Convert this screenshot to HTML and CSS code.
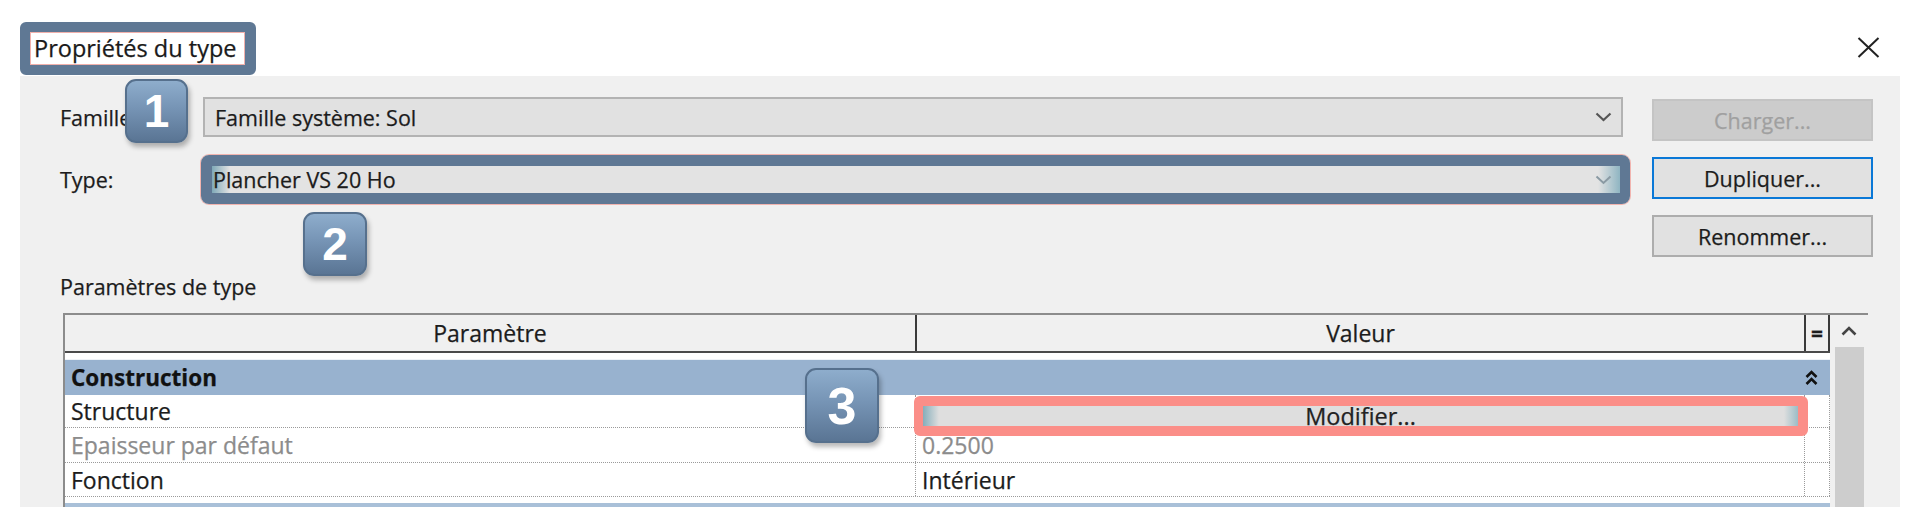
FILE: index.html
```html
<!DOCTYPE html>
<html lang="fr">
<head>
<meta charset="utf-8">
<title>Propriétés du type</title>
<link rel="stylesheet" href="styles.css">
</head>
<body>
<div class="dialog">
  <header class="titlebar">
    <div class="title-hl"><span class="title">Propriétés du type</span></div>
    <button class="close" aria-label="Fermer">
      <svg width="23" height="21" viewBox="0 0 23 21"><path d="M1.5 1 L21.5 20 M21.5 1 L1.5 20" stroke="#222" stroke-width="2" fill="none"/></svg>
    </button>
  </header>

  <section class="panel">
    <div class="top">
      <div class="fields">
        <div class="row r-famille">
          <span class="lbl">Famille:</span>
          <div class="select">
            <span class="sel-text">Famille système: Sol</span>
            <svg class="chev" width="17" height="10" viewBox="0 0 17 10"><path d="M1.5 1.5 L8.5 8 L15.5 1.5" stroke="#555" stroke-width="2.2" fill="none"/></svg>
          </div>
        </div>
        <div class="row r-type">
          <span class="lbl">Type:</span>
          <div class="hl-type">
            <div class="select sel-type">
              <span class="sel-text">Plancher VS 20 Ho</span>
              <svg class="chev light" width="17" height="10" viewBox="0 0 17 10"><path d="M1.5 1.5 L8.5 8 L15.5 1.5" stroke="#8a9aa3" stroke-width="2" fill="none"/></svg>
            </div>
          </div>
        </div>
      </div>
      <div class="buttons">
        <button class="btn disabled">Charger...</button>
        <button class="btn focused">Dupliquer...</button>
        <button class="btn">Renommer...</button>
      </div>
    </div>

    <div class="section-label">Paramètres de type</div>

    <div class="table">
      <div class="grid">
        <div class="head">
          <div class="c">Paramètre</div>
          <div class="c">Valeur</div>
          <div class="c eq">=</div>
        </div>
        <div class="spacer"></div>
        <div class="cat">
          <span>Construction</span>
          <svg width="13" height="16" viewBox="0 0 13 16"><path d="M1.5 7 L6.5 2 L11.5 7 M1.5 14 L6.5 9 L11.5 14" stroke="#111" stroke-width="2.6" fill="none"/></svg>
        </div>
        <div class="data h33">
          <div class="c">Structure</div>
          <div class="c val-bar"><div class="bar">Modifier...</div></div>
          <div class="c"></div>
        </div>
        <div class="data h35 muted">
          <div class="c">Epaisseur par défaut</div>
          <div class="c">0.2500</div>
          <div class="c"></div>
        </div>
        <div class="data h34">
          <div class="c">Fonction</div>
          <div class="c">Intérieur</div>
          <div class="c"></div>
        </div>
        <div class="gap"></div>
        <div class="cat next"></div>
      </div>
      <div class="scroll">
        <div class="arrow">
          <svg width="16" height="10" viewBox="0 0 16 10"><path d="M1.5 8.5 L8 2 L14.5 8.5" stroke="#444" stroke-width="2.6" fill="none"/></svg>
        </div>
        <div class="thumb"></div>
      </div>
    </div>
  </section>

  <div class="hl-red"></div>

  <div class="badge b1">1</div>
  <div class="badge b2">2</div>
  <div class="badge b3">3</div>
</div>
</body>
</html>
```

FILE: styles.css
```css
* { box-sizing: border-box; }

html, body {
  margin: 0;
  padding: 0;
}

body {
  width: 1924px;
  height: 526px;
  overflow: hidden;
  background: #ffffff;
  font-family: "Open Sans", "Noto Sans", sans-serif;
  color: #1c1c1c;
  -webkit-text-stroke: 0.25px currentColor;
}

.dialog {
  position: relative;
  width: 1924px;
  height: 526px;
}

/* title bar */
.titlebar {
  height: 76px;
  display: flex;
  align-items: flex-start;
  padding: 22px 44px 0 20px;
}

.title-hl {
  width: 236px;
  height: 53px;
  border: 10px solid #5f7894;
  border-right-width: 11px;
  border-radius: 6px;
  background: #ffffff;
  box-shadow: inset 0 0 0 1px #f1b0ab;
  display: flex;
  align-items: center;
  padding-left: 4px;
}

.title {
  font-size: 23.5px;
  line-height: 1;
  color: #1a1a1a;
  white-space: nowrap;
}

.close {
  margin-left: auto;
  margin-top: 15px;
  width: 23px;
  height: 21px;
  padding: 0;
  border: 0;
  background: none;
  display: block;
}

.close svg { display: block; }

/* panel */
.panel {
  margin-left: 20px;
  width: 1880px;
  height: 431px;
  background: #f0f0f0;
  overflow: hidden;
  padding: 21px 0 0 40px;
}

.top {
  display: flex;
  align-items: flex-start;
}

.fields {
  display: flex;
  flex-direction: column;
  gap: 18px;
  width: 1570px;
}

.row {
  display: flex;
  align-items: center;
}

.lbl {
  font-size: 21.5px;
  white-space: nowrap;
}

.r-famille .lbl { width: 143px; }
.r-type .lbl { width: 141px; }

.select {
  display: flex;
  align-items: center;
  justify-content: space-between;
  background: #e1e1e1;
  font-size: 21.5px;
}

.r-famille .select {
  width: 1420px;
  height: 40px;
  border: 2px solid #b3b3b3;
  padding: 0 9px 0 10px;
}

.sel-text { white-space: nowrap; }

.chev { display: block; }

.hl-type {
  width: 1429px;
  height: 49px;
  border-style: solid;
  border-color: #5f7894;
  border-width: 11px 10px 11px 11px;
  border-radius: 8px;
  box-shadow: 0 0 0 1px rgba(242, 160, 154, 0.75);
}

.sel-type {
  width: 100%;
  height: 27px;
  padding: 0 8px 0 1px;
  background:
    linear-gradient(90deg, #7fa9b8 0, rgba(227, 227, 227, 0) 18px),
    linear-gradient(270deg, #8fb5c2 0, rgba(227, 227, 227, 0) 22px),
    #e3e3e3;
}

/* buttons */
.buttons {
  display: flex;
  flex-direction: column;
  gap: 16px;
  margin-left: 22px;
  padding-top: 2px;
}

.btn {
  width: 221px;
  height: 42px;
  font-family: inherit;
  font-size: 21.5px;
  color: #1c1c1c;
  background: #e1e1e1;
  border: 2px solid #adadad;
  padding: 0;
  -webkit-text-stroke: 0.25px currentColor;
}

.btn.disabled {
  background: #cccccc;
  border-color: #c4c4c4;
  color: #a0a0a0;
}

.btn.focused {
  border-color: #0a78d7;
}

.section-label {
  margin-top: 16px;
  font-size: 21.5px;
  line-height: 28px;
}

/* table */
.table {
  margin-top: 12px;
  margin-left: 3px;
  width: 1805px;
  display: flex;
  border-top: 2px solid #8c8c8c;
}

.grid {
  width: 1767px;
  border-left: 2px solid #8c8c8c;
  background: #ffffff;
}

.head {
  display: grid;
  grid-template-columns: 850px 889px 26px;
  height: 38px;
  background: #f0f0f0;
  border-bottom: 2px solid #4a4a4a;
}

.head .c {
  display: flex;
  align-items: center;
  justify-content: center;
  font-size: 23px;
}

.head .c + .c {
  border-left: 2px solid #3a3a3a;
}

.head .eq {
  border-right: 2px solid #3a3a3a;
  font-weight: 700;
  font-size: 21px;
}

.spacer {
  height: 7px;
  background: #ffffff;
  border-bottom: 1px solid #eef2f7;
}

.cat {
  height: 35px;
  background: #98b2cf;
  display: flex;
  align-items: center;
  justify-content: space-between;
  padding: 0 12px 0 6px;
  font-size: 22.5px;
  font-weight: 700;
  color: #111;
}

.cat svg { display: block; }

.cat.next {
  background: #a9c0d8;
}

.data {
  display: grid;
  grid-template-columns: 850px 889px 26px;
  border-bottom: 1px dotted #9a9a9a;
  font-size: 23px;
}

.data .c {
  display: flex;
  align-items: center;
  padding-left: 6px;
  white-space: nowrap;
}

.data .c + .c {
  border-left: 1px dotted #9a9a9a;
}

.data .c:last-child {
  border-right: 1px dotted #9a9a9a;
  padding-left: 0;
}

.h33 { height: 33px; }
.h35 { height: 35px; }
.h34 { height: 34px; }

.muted { color: #8c8c8c; }

.data .val-bar {
  align-items: flex-start;
  padding-left: 7px;
}

.bar {
  margin-top: 11px;
  width: 875px;
  height: 20px;
  line-height: 20px;
  text-align: center;
  font-size: 23.5px;
  color: #222;
  background:
    linear-gradient(90deg, #86aebb 0, rgba(222, 222, 222, 0) 16px),
    linear-gradient(270deg, #9cbcc6 0, rgba(222, 222, 222, 0) 14px),
    #dedede;
}

.gap {
  height: 6px;
  background: #ffffff;
}

.scroll {
  width: 38px;
  display: flex;
  flex-direction: column;
  align-items: center;
  background: #f0f0f0;
}

.arrow {
  height: 32px;
  display: flex;
  align-items: center;
  justify-content: center;
}

.arrow svg { display: block; }

.thumb {
  width: 29px;
  height: 200px;
  background: #cdcdcd;
}

/* annotation overlays */
.hl-red {
  position: absolute;
  left: 914px;
  top: 396px;
  width: 894px;
  height: 40px;
  border: 10px solid #fb8e88;
  border-left-width: 9px;
  border-radius: 6px;
}

.badge {
  position: absolute;
  display: flex;
  align-items: center;
  justify-content: center;
  color: #ffffff;
  font-family: "Liberation Sans", Arial, sans-serif;
  font-weight: 700;
  -webkit-text-stroke: 0;
  border-radius: 11px;
  border: 2px solid #56708d;
  background: linear-gradient(180deg, #8eadcc 0%, #7694b5 45%, #5a7594 100%);
  box-shadow: 2px 4px 5px rgba(0, 0, 0, 0.28);
}

.b1 {
  left: 125px;
  top: 79px;
  width: 63px;
  height: 64px;
  font-size: 46px;
}

.b2 {
  left: 303px;
  top: 212px;
  width: 64px;
  height: 64px;
  font-size: 46px;
}

.b3 {
  left: 805px;
  top: 368px;
  width: 74px;
  height: 75px;
  font-size: 52px;
}
```
